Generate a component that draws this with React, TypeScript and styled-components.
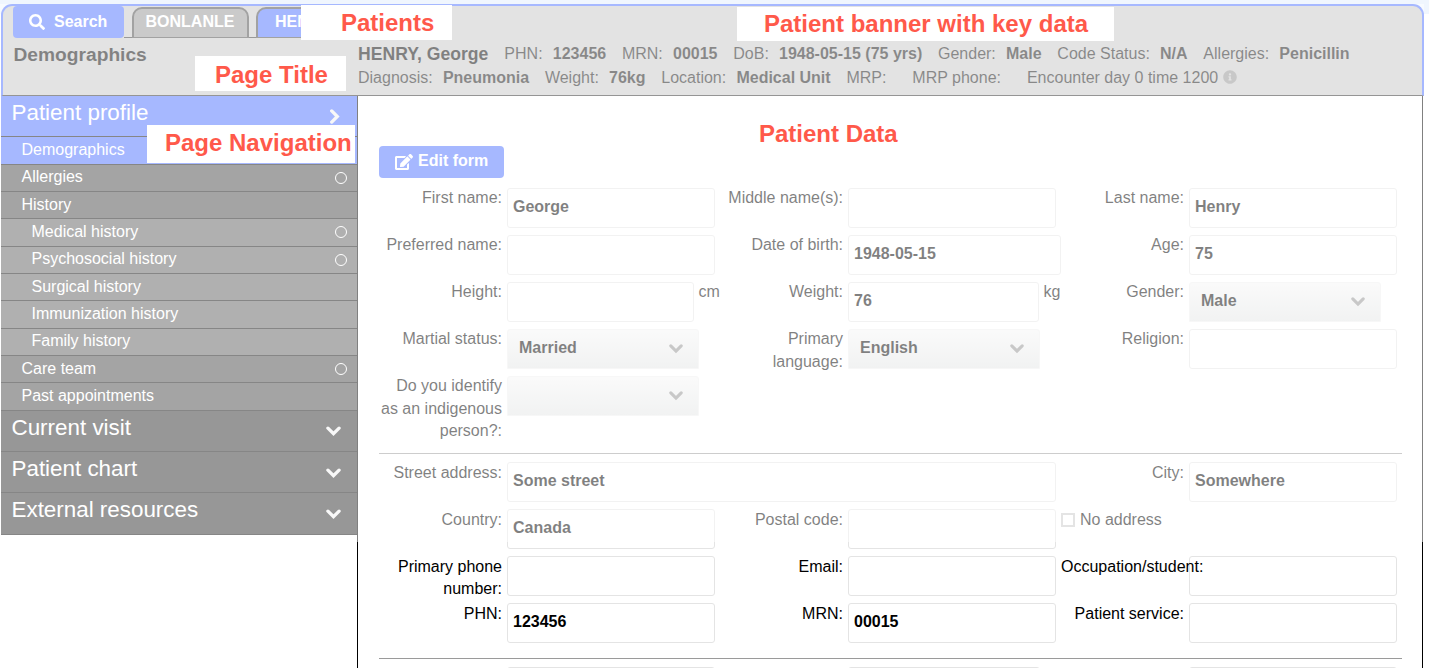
import React from 'react';
import styled, { createGlobalStyle, css } from 'styled-components';
import { FaSearch, FaEdit, FaInfoCircle } from 'react-icons/fa';

const GlobalStyle = createGlobalStyle`
  * { box-sizing: border-box; }
  html, body { margin: 0; padding: 0; background: #fff; overflow: hidden; }
  body { font-family: "Liberation Sans", Arial, Helvetica, sans-serif; font-size: 16px; color: #000; }
`;

const BLUE = '#4d71ff';

const Page = styled.div`
  position: relative;
  display: flex;
  flex-direction: column;
  width: 1429px;
  height: 668px;
  padding: 4px 5px 0 1px;
  background: linear-gradient(#f0f6fe 0 14px, #fff 14px);
  overflow: hidden;
`;

const Header = styled.header`
  flex: none;
  width: 1423px;
  height: 92px;
  background: #c6c6c6;
  border: 2px solid ${BLUE};
  border-bottom: 1px solid #2b2b2b;
  border-radius: 11px 11px 0 0;
`;

const TabBar = styled.div`
  display: flex;
  align-items: flex-start;
  height: 32px;
  padding-left: 10px;
`;

const SearchButton = styled.button`
  display: flex;
  align-items: center;
  gap: 9px;
  width: 111px;
  height: 32px;
  padding: 0 0 1px 16px;
  border: 0;
  border-radius: 4px;
  background: ${BLUE};
  color: #fff;
  font: bold 16px "Liberation Sans", Arial, sans-serif;
`;

const TabStrip = styled.div`
  display: flex;
  gap: 8px;
  height: 32px;
  padding: 1px 0 0 8px;
  border-bottom: 1px solid #333;
`;

const Tab = styled.div<{ $active?: boolean }>`
  width: 117px;
  height: 31px;
  margin-left: -0.5px;
  border: 2px solid #444;
  border-bottom-width: 1px;
  border-radius: 10px 10px 0 0;
  background: ${p => (p.$active ? BLUE : '#959595')};
  color: #fff;
  font-weight: bold;
  line-height: 25px;
  padding-left: ${p => (p.$active ? '17px' : '12px')};
  white-space: nowrap;
  overflow: hidden;
`;

const Banner = styled.div`
  display: flex;
`;

const PageTitle = styled.h1`
  flex: none;
  width: 355px;
  margin: 0;
  padding: 5px 0 0 10.5px;
  font-size: 19.2px;
  line-height: 24px;
  color: #050505;
`;

const PatientInfo = styled.div`
  padding-top: 4px;
`;

const InfoLine = styled.div`
  display: flex;
  height: 24px;
  line-height: 24px;
  white-space: nowrap;
`;

const PatientName = styled.strong`
  font-size: 17.6px;
  margin-right: 16px;
`;

const Fact = styled.span`
  display: flex;
  gap: 10.2px;
  margin-right: 15.75px;
  color: #111;
`;

const InfoMark = styled.span`
  display: flex;
  align-items: center;
  margin: -2px 0 0 -11px;
  color: #919191;
`;

const Body = styled.div`
  display: flex;
  flex: 1;
  width: 1422px;
`;

const Nav = styled.nav`
  width: 356px;
  flex: none;
`;

const NavGroup = styled.div<{ $active?: boolean }>`
  display: flex;
  justify-content: space-between;
  height: 41.25px;
  padding: 0 ${p => (p.$active ? 15 : 16)}px 0 10.5px;
  font-size: 22.4px;
  line-height: 33px;
  color: #fff;
  background: ${p => (p.$active ? BLUE : '#2f2f2f')};
  border-bottom: 1px solid #0d0d0d;
  svg { margin-top: 12.5px; color: #f0f0f0; }
`;

const levels = {
  active: css`background: ${BLUE}; padding-left: 20.5px;`,
  item: css`background: #494949; padding-left: 20.5px;`,
  sub: css`background: #616161; padding-left: 30.5px;`,
};

const NavItem = styled.div<{ $level: keyof typeof levels }>`
  display: flex;
  align-items: center;
  justify-content: space-between;
  height: 27.37px;
  padding-right: 10px;
  padding-bottom: 1.2px;
  border-bottom: 1px solid #0d0d0d;
  color: #fff;
  ${p => levels[p.$level]}
`;

const StatusRing = styled.i`
  width: 12px;
  height: 12px;
  margin-top: 1px;
  border: 1px solid #fff;
  border-radius: 50%;
`;

const Content = styled.main`
  flex: 1;
  border-left: 1px solid #000;
  border-right: 1px solid #000;
  padding: 50px 20px 0 21px;
`;

const EditButton = styled.button`
  display: flex;
  align-items: center;
  gap: 5px;
  width: 125px;
  height: 32px;
  margin-bottom: 9px;
  padding: 0 0 2px 16px;
  border: 0;
  border-radius: 4px;
  background: ${BLUE};
  color: #fff;
  font: bold 16px "Liberation Sans", Arial, sans-serif;
  svg { margin-top: 2px; }
`;

const FieldBox = styled.div<{ $wide?: boolean }>`
  display: flex;
  gap: 5px;
  height: 47px;
  grid-column: span ${p => (p.$wide ? 2 : 1)};
`;

const Label = styled.label`
  flex: none;
  width: 123px;
  text-align: right;
  line-height: 22.5px;
`;

const Overflowing = styled.span`
  position: relative;
  z-index: 1;
  white-space: nowrap;
  float: left;
`;

const Input = styled.div<{ $w: number }>`
  flex: none;
  width: ${p => p.$w}px;
  height: 40px;
  margin-top: 0.6px;
  padding-left: 5px;
  border: 1px solid #e4e4e4;
  border-radius: 3px;
  background: #fff;
  font-weight: bold;
  line-height: 36px;
`;

const Select = styled.div`
  flex: none;
  display: flex;
  justify-content: space-between;
  align-items: center;
  width: 192px;
  height: 40px;
  margin-top: 0.6px;
  padding: 0 15px 0 11px;
  border: 1px solid #eeeeee;
  border-radius: 3px 3px 0 0;
  background: linear-gradient(#f5f5f5, #e3e5e5);
  font-weight: bold;
  span { margin-top: -2px; }
  svg { color: #919191; margin-top: -2px; }
`;

const Unit = styled.span`
  line-height: 22.5px;
`;

const CheckLine = styled.label`
  display: flex;
  gap: 5px;
  height: 23px;
  line-height: 22.5px;
`;

const CheckBox = styled.i`
  width: 14px;
  height: 14px;
  margin-top: 4px;
  border: 2px solid #c8c8c8;
`;

const Section = styled.section<{ $divided?: boolean }>`
  display: grid;
  grid-template-columns: repeat(3, 341px);
  grid-auto-rows: 47px;
  width: 1023px;
  ${p => p.$divided && css`
    border-top: 1px solid #9a9a9a;
    padding-top: 7px;
    ${Label}, ${CheckLine} { padding-top: 0.5px; }
  `}
`;

const Veil = styled.div`
  position: absolute;
  left: 0;
  top: 4px;
  width: 1424px;
  height: 538px;
  background: rgba(255, 255, 255, 0.5);
  pointer-events: none;
  z-index: 2;
`;

const Callout = styled.div<{ $x: number; $y: number; $w: number; $h: number; $pad: number; $top: number }>`
  position: absolute;
  z-index: 3;
  left: ${p => p.$x}px;
  top: ${p => p.$y}px;
  width: ${p => p.$w}px;
  height: ${p => p.$h}px;
  padding: ${p => p.$top}px 0 0 ${p => p.$pad}px;
  background: #fff;
  color: #ff594a;
  font-size: 24px;
  font-weight: bold;
  line-height: 28px;
  white-space: nowrap;
`;

const Chevron = ({ right, size = 14 }: { right?: boolean; size?: number }) => (
  <svg width={size} height={size} viewBox="0 0 14 14" fill="none" stroke="currentColor" strokeWidth="3.1">
    <path
      d={right ? 'M4.4 1.8 L9.6 7 L4.4 12.2' : 'M1.8 4.8 L7 10 L12.2 4.8'}
      strokeLinecap="round"
    />
  </svg>
);

type FieldProps = { label: string; value?: string; w?: number; wide?: boolean; unit?: string; select?: boolean; spill?: boolean };

const Field = ({ label, value = '', w = 208, wide, unit, select, spill }: FieldProps) => (
  <FieldBox $wide={wide}>
    <Label>{spill ? <Overflowing>{label}:</Overflowing> : `${label}:`}</Label>
    {select ? (
      <Select>
        <span>{value}</span>
        <Chevron />
      </Select>
    ) : (
      <Input $w={w}>{value}</Input>
    )}
    {unit && <Unit>{unit}</Unit>}
  </FieldBox>
);

const facts1 = [
  ['PHN', '123456'], ['MRN', '00015'], ['DoB', '1948-05-15 (75 yrs)'], ['Gender', 'Male'],
  ['Code Status', 'N/A'], ['Allergies', 'Penicillin'],
];
const facts2 = [
  ['Diagnosis', 'Pneumonia'], ['Weight', '76kg'], ['Location', 'Medical Unit'], ['MRP', ''], ['MRP phone', ''],
];

const navItems: { text: string; level: keyof typeof levels; ring?: boolean }[] = [
  { text: 'Demographics', level: 'active' },
  { text: 'Allergies', level: 'item', ring: true },
  { text: 'History', level: 'item' },
  { text: 'Medical history', level: 'sub', ring: true },
  { text: 'Psychosocial history', level: 'sub', ring: true },
  { text: 'Surgical history', level: 'sub' },
  { text: 'Immunization history', level: 'sub' },
  { text: 'Family history', level: 'sub' },
  { text: 'Care team', level: 'item', ring: true },
  { text: 'Past appointments', level: 'item' },
];

const Facts = ({ list }: { list: string[][] }) => (
  <>
    {list.map(([k, v]) => (
      <Fact key={k}>
        <span>{k}:</span>
        <b>{v}</b>
      </Fact>
    ))}
  </>
);

const Spacer = styled.div<{ $h: number }>`
  height: ${p => p.$h}px;
`;

const NextInput = styled(Input)`
  margin-left: 128px;
`;

export default function App() {
  return (
    <Page>
      <GlobalStyle />
      <Header>
        <TabBar>
          <SearchButton><FaSearch size={16} />Search</SearchButton>
          <TabStrip>
            <Tab>BONLANLE</Tab>
            <Tab $active>HENRY</Tab>
          </TabStrip>
        </TabBar>
        <Banner>
          <PageTitle>Demographics</PageTitle>
          <PatientInfo>
            <InfoLine>
              <PatientName>HENRY, George</PatientName>
              <Facts list={facts1} />
            </InfoLine>
            <InfoLine>
              <Facts list={facts2} />
              <Fact>Encounter day 0 time 1200</Fact>
              <InfoMark><FaInfoCircle size={14} /></InfoMark>
            </InfoLine>
          </PatientInfo>
        </Banner>
      </Header>
      <Body>
        <Nav>
          <NavGroup $active>Patient profile<Chevron right size={15} /></NavGroup>
          {navItems.map(n => (
            <NavItem key={n.text} $level={n.level}>
              {n.text}
              {n.ring && <StatusRing />}
            </NavItem>
          ))}
          {['Current visit', 'Patient chart', 'External resources'].map(g => (
            <NavGroup key={g}>{g}<Chevron size={15} /></NavGroup>
          ))}
        </Nav>
        <Content>
          <EditButton><FaEdit size={18} />Edit form</EditButton>
          <Section>
            <Field label="First name" value="George" />
            <Field label="Middle name(s)" />
            <Field label="Last name" value="Henry" />
            <Field label="Preferred name" />
            <Field label="Date of birth" value="1948-05-15" w={213} />
            <Field label="Age" value="75" />
            <Field label="Height" w={186.5} unit="cm" />
            <Field label="Weight" value="76" w={190.5} unit="kg" />
            <Field label="Gender" value="Male" select />
            <Field label="Martial status" value="Married" select />
            <Field label="Primary language" value="English" select />
            <Field label="Religion" />
            <Field label="Do you identify as an indigenous person?" select />
          </Section>
          <Spacer $h={31} />
          <Section $divided>
            <Field label="Street address" value="Some street" w={549} wide />
            <Field label="City" value="Somewhere" />
            <Field label="Country" value="Canada" />
            <Field label="Postal code" />
            <CheckLine><CheckBox />No address</CheckLine>
            <Field label="Primary phone number" />
            <Field label="Email" />
            <Field label="Occupation/student" spill />
            <Field label="PHN" value="123456" />
            <Field label="MRN" value="00015" />
            <Field label="Patient service" />
          </Section>
          <Spacer $h={9} />
          <Section $divided>
            <NextInput $w={208} />
            <NextInput $w={192} />
            <NextInput $w={208} />
          </Section>
        </Content>
      </Body>
      <Veil />
      <Callout $x={301} $y={5} $w={151} $h={35} $pad={40} $top={4}>Patients</Callout>
      <Callout $x={195} $y={56} $w={151} $h={35} $pad={20} $top={5}>Page Title</Callout>
      <Callout $x={737} $y={7} $w={377} $h={34} $pad={27} $top={3}>Patient banner with key data</Callout>
      <Callout $x={147} $y={125} $w={208} $h={38} $pad={18} $top={4}>Page Navigation</Callout>
      <Callout $x={749} $y={115} $w={160} $h={38} $pad={10} $top={5}>Patient Data</Callout>
    </Page>
  );
}
